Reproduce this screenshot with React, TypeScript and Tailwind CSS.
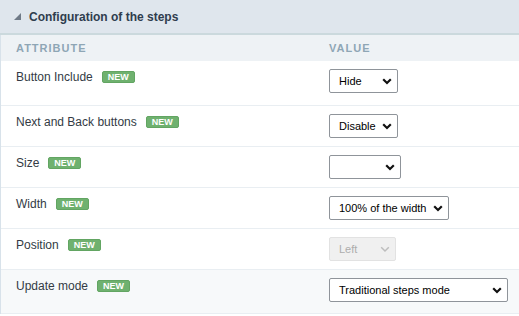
const rows = [
  { label: 'Button Include', value: 'Hide', width: 'w-[69px]', h: 'h-[45px]' },
  { label: 'Next and Back buttons', value: 'Disable', width: 'w-[69px]', h: 'h-[41px]' },
  { label: 'Size', value: '', width: 'w-[72px]', h: 'h-[41px]' },
  { label: 'Width', value: '100% of the width', width: 'w-[120px]', h: 'h-[41px]' },
  { label: 'Position', value: 'Left', width: 'w-[67px]', h: 'h-[41px]', disabled: true },
  { label: 'Update mode', value: 'Traditional steps mode', width: 'w-[179px]', h: 'h-[44px]', hover: true },
]

function Chevron({ disabled }: { disabled?: boolean }) {
  return (
    <svg width="10" height="7" viewBox="0 0 10 7" className="shrink-0">
      <path
        d="M1.2 1.3 L5 5 L8.8 1.3"
        fill="none"
        stroke={disabled ? '#bdbdbd' : '#111'}
        strokeWidth={disabled ? 1.5 : 2.2}
      />
    </svg>
  )
}

function FakeSelect({ value, width, disabled }: { value: string; width: string; disabled?: boolean }) {
  return (
    <div
      className={`${width} h-[24px] flex items-center justify-between pl-[9px] pr-[5px] rounded-[2px] border text-[11px] ${
        disabled
          ? 'bg-[#f0f0f0] border-[#e2e2e2] text-[#adadad]'
          : 'bg-white border-[#8f949a] text-black'
      }`}
    >
      <span className="whitespace-nowrap">{value}</span>
      <Chevron disabled={disabled} />
    </div>
  )
}

export default function App() {
  return (
    <div className="w-[519px] h-[316px] bg-white overflow-hidden font-['Liberation_Sans',Arial,sans-serif]">
      {/* header */}
      <div className="h-[35px] bg-[#dfe6ed] border-b-2 border-[#cbd9dd] flex items-center pl-[14px] gap-[8px]">
        <svg width="7" height="7" viewBox="0 0 7 7">
          <path d="M7 0 L7 7 L0 7 Z" fill="#6f7a87" />
        </svg>
        <span className="text-[12px] font-bold text-[#2f3d4e]">Configuration of the steps</span>
      </div>

      <div className="border-l border-[#d8e2ea]">
        {/* column titles */}
        <div className="h-[26px] bg-[#eef2f5] flex items-center text-[11px] font-bold tracking-[1px] text-[#8ea6b5]">
          <div className="w-[328px] pl-[15px]">ATTRIBUTE</div>
          <div>VALUE</div>
        </div>

        {rows.map((r) => (
          <div
            key={r.label}
            className={`${r.h} flex items-start border-b border-[#e9eef2] ${r.hover ? 'bg-[#f7f9fa]' : 'bg-white'}`}
          >
            <div className="w-[328px] pl-[15px] pt-[9px] flex items-center gap-[9px]">
              <span className="text-[12px] text-[#333b45] leading-[14px]">{r.label}</span>
              <span className="h-[12px] px-[5px] flex items-center rounded-[2px] bg-[#6fb16f] border border-[#62a562] text-white text-[9px] font-bold leading-none">
                NEW
              </span>
            </div>
            <div className="pt-[8px]">
              <FakeSelect value={r.value} width={r.width} disabled={r.disabled} />
            </div>
          </div>
        ))}
      </div>
    </div>
  )
}
